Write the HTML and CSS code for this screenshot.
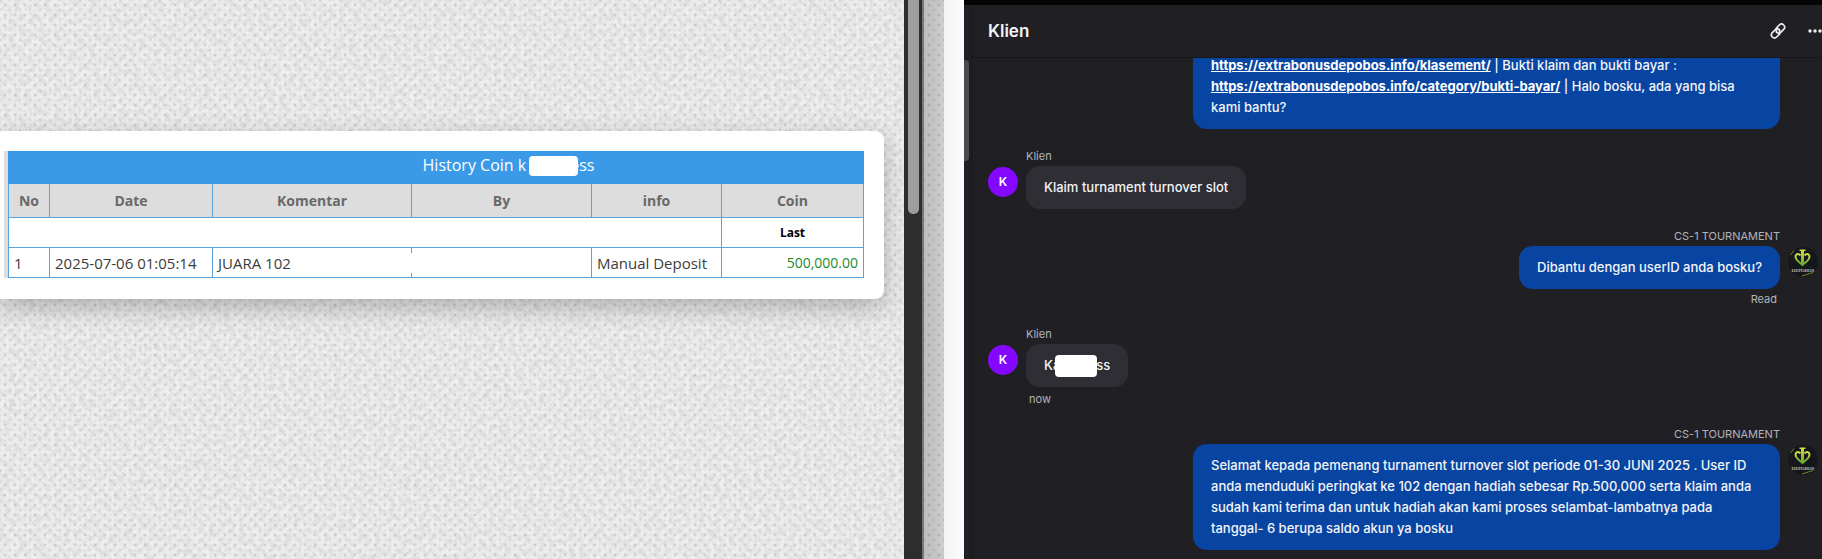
FILE: index.html
```html
<!DOCTYPE html>
<html lang="id">

<head>
  <meta charset="utf-8">
  <title>Klien</title>
  <meta name="viewport" content="width=device-width, initial-scale=1">
  <link rel="stylesheet" href="styles.css">
</head>

<body>
  <svg class="defs" width="0" height="0" aria-hidden="true">
    <defs>
      <linearGradient id="lime" x1="0" y1="0" x2="0" y2="1">
        <stop offset="0" stop-color="#d3e046" />
        <stop offset="1" stop-color="#5fa82a" />
      </linearGradient>
      <symbol id="logo" viewBox="0 0 30 30">
        <circle cx="15" cy="15" r="15" fill="#15171a" />
        <path d="M2.500 8L6 3.500M14 29L25 25.500" stroke="#6d8a24" stroke-width="1" />
        <path d="M11.500 2.500h6v1.500h-1.500v13l-1.500 2-1.500-2V4h-1.500z" fill="url(#lime)" />
        <path d="M12.500 8.500C9.500 5.500 6.500 8 8 11.500c1 2.500 4 4 6.500 6.500 2.500-2.500 5.500-4 6.500-6.500 1.500-3.500-1.500-6-4.500-3"
          fill="none" stroke="url(#lime)" stroke-width="2" />
        <text x="15" y="25" text-anchor="middle" class="logo-text">DEPOBOS</text>
      </symbol>
    </defs>
  </svg>

  <div class="screen">
    <main class="history fabric">
      <svg class="grain" aria-hidden="true">
        <filter id="noise">
          <feTurbulence type="fractalNoise" baseFrequency="0.200" numOctaves="2" seed="4" />
          <feColorMatrix values="0 0 0 0 0  0 0 0 0 0  0 0 0 0 0  1 0 0 0 -0.350" />
        </filter>
        <rect width="100%" height="100%" filter="url(#noise)" />
      </svg>
      <div class="card">
        <div class="sheet">
          <table>
            <colgroup>
              <col class="col-no">
              <col class="col-date">
              <col class="col-note">
              <col>
              <col class="col-info">
              <col class="col-coin">
            </colgroup>
            <thead>
              <tr class="title">
                <th colspan="6">History Coin k<span class="mask mask-title"></span>ess</th>
              </tr>
              <tr class="heads">
                <th>No</th>
                <th>Date</th>
                <th>Komentar</th>
                <th>By</th>
                <th>info</th>
                <th>Coin</th>
              </tr>
            </thead>
            <tbody>
              <tr class="last">
                <td colspan="5"></td>
                <th>Last</th>
              </tr>
              <tr class="entry">
                <td>1</td>
                <td>2025-07-06 01:05:14</td>
                <td>JUARA 102</td>
                <td><div class="blank"></div></td>
                <td>Manual Deposit</td>
                <td class="amount">500,000.00</td>
              </tr>
            </tbody>
          </table>
        </div>
      </div>
    </main>

    <div class="scrollbar"><div class="thumb"></div></div>
    <div class="edge fabric"></div>
    <div class="gutter"></div>

    <section class="chat">
      <div class="rail"><div class="rail-thumb"></div></div>
      <div class="conversation">
        <header class="chat-header">
          <h1>Klien</h1>
          <div class="actions">
            <button type="button" aria-label="Link">
              <svg width="16" height="16" viewBox="0 0 24 24" fill="none" stroke="currentColor" stroke-width="2.500" stroke-linecap="round" stroke-linejoin="round">
                <path d="M9.500 13.500a4.500 4.500 0 0 0 6.500.500l4.500-4.500a4.500 4.500 0 0 0-6.500-6.500l-3.500 3.500a4.500 4.500 0 0 0-.500 6" />
                <path d="M14.500 10.500a4.500 4.500 0 0 0-6.500-.500l-4.500 4.500a4.500 4.500 0 0 0 6.500 6.500l3.500-3.500a4.500 4.500 0 0 0 .500-6" />
              </svg>
            </button>
            <button type="button" aria-label="More">
              <svg width="14" height="4" viewBox="0 0 14 4" fill="currentColor">
                <circle cx="2" cy="2" r="1.700" />
                <circle cx="7" cy="2" r="1.700" />
                <circle cx="12" cy="2" r="1.700" />
              </svg>
            </button>
          </div>
        </header>

        <div class="messages">
          <article class="message agent">
            <div class="stack">
              <p class="bubble continued">
                <a href="#klasement">https://extrabonusdepobos.info/klasement/</a> | Bukti klaim dan bukti bayar :
                <a href="#bukti-bayar">https://extrabonusdepobos.info/category/bukti-bayar/</a> | Halo bosku, ada yang bisa kami bantu?
              </p>
            </div>
            <div class="avatar-space"></div>
          </article>

          <article class="message client">
            <span class="avatar">K</span>
            <div class="stack">
              <span class="name">Klien</span>
              <p class="bubble">Klaim turnament turnover slot</p>
            </div>
          </article>

          <article class="message agent">
            <div class="stack">
              <span class="name">CS-1 TOURNAMENT</span>
              <p class="bubble">Dibantu dengan userID anda bosku?</p>
              <span class="status">Read</span>
            </div>
            <svg class="logo" width="30" height="30"><use href="#logo" /></svg>
          </article>

          <article class="message client">
            <span class="avatar">K</span>
            <div class="stack">
              <span class="name">Klien</span>
              <p class="bubble">Ka<span class="mask mask-user"></span>ss</p>
              <span class="status">now</span>
            </div>
          </article>

          <article class="message agent">
            <div class="stack">
              <span class="name">CS-1 TOURNAMENT</span>
              <p class="bubble">Selamat kepada pemenang turnament turnover slot periode 01-30 JUNI 2025 . User ID anda menduduki peringkat ke 102 dengan hadiah sebesar Rp.500,000 serta klaim anda sudah kami terima dan untuk hadiah akan kami proses selambat-lambatnya pada tanggal- 6 berupa saldo akun ya bosku</p>
            </div>
            <svg class="logo" width="30" height="30"><use href="#logo" /></svg>
          </article>
        </div>
      </div>
    </section>
  </div>
</body>

</html>
```

FILE: styles.css
```css
* {
  box-sizing: border-box;
}

body {
  margin: 0;
  font-family: Inter, "Liberation Sans", sans-serif;
}

.defs {
  display: block;
}

.screen {
  display: grid;
  grid-template-columns: 904fr 20px 20px 20px 858fr;
  height: 100vh;
  overflow: hidden;
}

/* woven background */
.fabric {
  background-color: #eeeeee;
  background-image:
    radial-gradient(circle, rgba(0, 0, 0, 0.17) 0, transparent 2px),
    radial-gradient(circle, rgba(0, 0, 0, 0.11) 0, transparent 2px);
  background-size: 10px 10px;
  background-position: 0 0, 5px 5px;
}

.history {
  position: relative;
  overflow: hidden;
}

.grain {
  position: absolute;
  inset: 0;
  width: 100%;
  height: 100%;
  opacity: 0.17;
}

.card {
  position: relative;
  margin: 131px 20px 0 0;
  padding: 20px 20px 21px 4px;
  background: #fff;
  border-radius: 0 9px 9px 0;
  box-shadow: 0 8px 24px rgba(0, 0, 0, 0.25);
}

.sheet {
  padding-left: 4px;
  background: linear-gradient(90deg, #ddd 4px, #fff 4px);
}

table {
  width: 100%;
  table-layout: fixed;
  border-collapse: collapse;
  font-family: "Open Sans", "Noto Sans", sans-serif;
  font-size: 15px;
  line-height: 20px;
  color: #3c3c3c;
}

.col-no {
  width: 41px;
}

.col-date {
  width: 163px;
}

.col-note {
  width: 199px;
}

.col-info {
  width: 130px;
}

.col-coin {
  width: 142px;
}

td,
th {
  padding: 0 5px;
  border: 1px solid #5ba3dc;
}

.title th {
  height: 32px;
  padding: 0 0 4px 145px;
  background: #3a9ae8;
  border-color: #3a9ae8;
  color: #fff;
  font-size: 16px;
  font-weight: 400;
}

.heads th {
  height: 34px;
  background: #ddd;
  color: #696969;
  font-size: 14px;
}

.last td,
.last th {
  height: 30px;
  color: #000;
  font-size: 12px;
}

.entry td {
  height: 30px;
  white-space: nowrap;
}

.entry .amount {
  color: #1c8a2a;
  font-size: 14px;
  text-align: right;
}

.blank {
  position: relative;
  height: 20px;
  margin-left: -8px;
  background: #fff;
}

.mask {
  display: inline-block;
  position: relative;
  background: #fff;
  border-radius: 4px;
  vertical-align: middle;
}

.mask-title {
  width: 49px;
  height: 20px;
  margin: 0 -8px 0 3px;
}

.mask-user {
  width: 42px;
  height: 22px;
  margin: -2px -1px -2px -5px;
}

.scrollbar {
  padding: 0 3px 0 4px;
  background: #2d2d2d;
  border-right: 2px solid #777;
}

.thumb {
  height: 214px;
  background: #9d9d9d;
  border-radius: 0 0 5px 5px;
}

.edge {
  background-color: #cfcfcf;
  box-shadow: inset 12px 0 12px rgba(0, 0, 0, 0.08);
}

.gutter {
  background: linear-gradient(90deg, #f3f3f3, #fcfcfc);
}

/* chat */
.chat {
  display: flex;
  min-width: 0;
  border-top: 5px solid #050506;
  background: #202024;
  color: #f4f4f6;
  overflow: hidden;
}

.rail {
  flex: none;
  width: 8px;
  padding-top: 55px;
  border-right: 1px solid #18181b;
}

.rail-thumb {
  width: 5px;
  height: 101px;
  background: #494952;
  border-radius: 0 4px 4px 0;
}

.conversation {
  flex: 1;
  display: flex;
  flex-direction: column;
  min-width: 0;
}

.chat-header {
  flex: none;
  display: flex;
  align-items: center;
  justify-content: space-between;
  height: 53px;
  padding-left: 16px;
  border-bottom: 1px solid #18181b;
}

h1 {
  margin: 0;
  font-size: 17px;
  font-weight: 600;
}

.actions {
  display: flex;
  gap: 22px;
}

.actions button {
  display: flex;
  align-items: center;
  padding: 0;
  border: none;
  background: none;
  color: #eee;
}

.messages {
  flex: 1;
  display: flex;
  flex-direction: column;
  justify-content: flex-end;
  gap: 19px;
  min-height: 0;
  padding: 0 4px 9px 16px;
  overflow: hidden;
}

.message {
  flex: none;
  display: flex;
  gap: 8px;
}

.stack {
  display: flex;
  flex-direction: column;
  align-items: flex-start;
  gap: 2px;
  max-width: 587px;
}

.agent {
  justify-content: flex-end;
}

.agent .stack {
  align-items: flex-end;
}

.name,
.status {
  font-size: 11px;
  line-height: 16px;
  color: #b3b3bb;
}

.status {
  padding: 0 3px;
}

.client .status {
  margin-top: 2px;
}

.bubble {
  margin: 0;
  padding: 11px 18px;
  border-radius: 14px;
  background: #2e2e34;
  font-size: 13px;
  font-weight: 500;
  line-height: 21px;
}

.agent .bubble {
  background: #0845a3;
}

.agent .continued {
  border-radius: 0 0 14px 14px;
}

.bubble a {
  color: #fff;
  font-weight: 700;
}

.avatar,
.logo,
.avatar-space {
  flex: none;
  width: 30px;
  height: 30px;
  margin-top: 19px;
}

.avatar {
  border-radius: 50%;
  background: #8408ff;
  color: #fff;
  font-size: 12px;
  font-weight: 600;
  line-height: 30px;
  text-align: center;
}

.logo-text {
  fill: #e8e8e8;
  font-family: "Liberation Serif", serif;
  font-size: 5px;
}
```
